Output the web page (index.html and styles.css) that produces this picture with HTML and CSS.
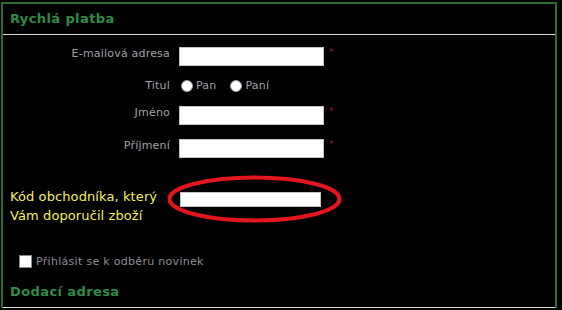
FILE: index.html
```html
<!DOCTYPE html>
<html lang="cs">

<head>
    <meta charset="UTF-8">
    <meta name="viewport" content="width=device-width, initial-scale=1.0">
    <title>Rychlá platba</title>
    <link rel="stylesheet" href="styles.css">
</head>

<body>
    <div class="panel">
        <h2 class="title">Rychlá platba</h2>

        <div class="form">
            <div class="row r1">
                <label class="lbl" for="email">E-mailová adresa</label>
                <input type="text" id="email" class="field">
                <span class="req">*</span>
            </div>
            <div class="row r2">
                <span class="lbl">Titul</span>
                <label class="opt"><input type="radio" name="titul" class="radio"> Pan</label>
                <label class="opt"><input type="radio" name="titul" class="radio"> Paní</label>
            </div>
            <div class="row r3">
                <label class="lbl" for="jmeno">Jméno</label>
                <input type="text" id="jmeno" class="field">
                <span class="req">*</span>
            </div>
            <div class="row">
                <label class="lbl" for="prijmeni">Příjmení</label>
                <input type="text" id="prijmeni" class="field">
                <span class="req">*</span>
            </div>
        </div>

        <div class="kod">
            <label class="kodLbl" for="kod">Kód obchodníka, který<br>Vám doporučil zboží</label>
            <input type="text" id="kod" class="kodField">
            <svg class="circle" width="175" height="48" viewBox="0 0 175 48">
                <ellipse cx="87.5" cy="24" rx="85" ry="21.5" fill="none" stroke="#e3161f" stroke-width="4"/>
            </svg>
        </div>

        <label class="news"><input type="checkbox" class="check"> Přihlásit se k odběru novinek</label>

        <h2 class="title">Dodací adresa</h2>
    </div>
</body>

</html>
```

FILE: styles.css
```css
*{margin: 0px;padding: 0px;box-sizing: border-box;font-family: "DejaVu Sans", Verdana, sans-serif;}
body{background: #000;}
.panel{margin: 2px 0px 0px 1px;width: 556px;border: 2px solid #2b6b35;border-bottom: none;}
.title{height: 31px;line-height: 30px;padding-left: 7px;font-size: 13px;font-weight: bold;letter-spacing: 0.4px;color: #2f8c44;border-bottom: 1px solid #dcdcdc;}
.form{padding-top: 12px;}
.row{display: flex;align-items: flex-start;height: 19px;font-size: 11px;letter-spacing: 0.2px;color: #a0a2a8;}
.r1{margin-bottom: 10px;}
.r2{margin-bottom: 11px;align-items: center;}
.r3{margin-bottom: 14px;}
.lbl{width: 167px;margin-right: 9px;text-align: right;line-height: 13px;}
.r2 .lbl{line-height: 19px;}
.field{width: 145px;height: 19px;border: 1px solid #c4c4c4;background: #fff;}
.req{margin-left: 5px;color: #a11d1d;font-size: 9px;line-height: 10px;}
.opt{display: flex;align-items: center;margin-left: 2px;margin-right: 12px;gap: 3px;}
.radio{appearance: none;width: 12px;height: 12px;border-radius: 50%;background: #fff;border: 1px solid #9a9a9a;}
.kod{position: relative;display: flex;margin-top: 29px;height: 38px;}
.kodLbl{width: 167px;padding-left: 7px;font-size: 13px;letter-spacing: 0.1px;line-height: 19px;color: #f3f05a;}
.kodField{width: 141px;height: 15px;margin: 5px 0px 0px 10px;border: 1px solid #c4c4c4;background: #fff;}
.circle{position: absolute;left: 164px;top: -12px;}
.news{display: flex;align-items: center;gap: 4px;margin-top: 29px;padding-left: 16px;height: 14px;font-size: 11px;letter-spacing: 0.3px;color: #8c8e94;}
.check{appearance: none;width: 13px;height: 13px;background: #fff;border: 1px solid #8a8a8a;}
.news + .title{margin-top: 9px;}
```
